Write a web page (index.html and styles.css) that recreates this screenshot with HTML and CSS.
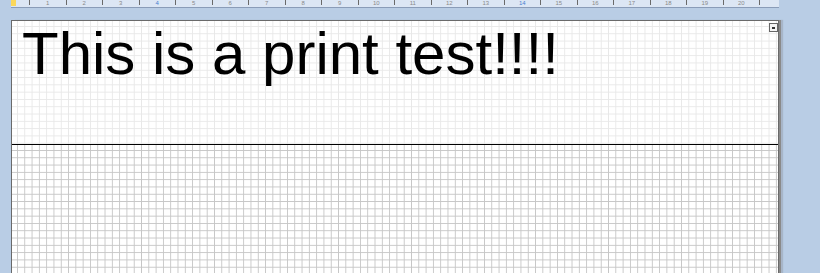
FILE: index.html
```html
<!doctype html>
<html lang="en">
 <head>
  <meta charset="UTF-8">
  <title>Print test</title>
  <link rel="stylesheet" href="styles.css">
 </head>
 <body>
  <div class="ruler">
   <span class="marker"></span>
   <div class="marks">
    <span class="tick"></span><span class="num">1</span>
    <span class="tick"></span><span class="num">2</span>
    <span class="tick"></span><span class="num">3</span>
    <span class="tick"></span><span class="num cur">4</span>
    <span class="tick"></span><span class="num">5</span>
    <span class="tick"></span><span class="num">6</span>
    <span class="tick"></span><span class="num">7</span>
    <span class="tick"></span><span class="num">8</span>
    <span class="tick"></span><span class="num">9</span>
    <span class="tick"></span><span class="num">10</span>
    <span class="tick"></span><span class="num">11</span>
    <span class="tick"></span><span class="num">12</span>
    <span class="tick"></span><span class="num">13</span>
    <span class="tick"></span><span class="num cur">14</span>
    <span class="tick"></span><span class="num">15</span>
    <span class="tick"></span><span class="num">16</span>
    <span class="tick"></span><span class="num">17</span>
    <span class="tick"></span><span class="num">18</span>
    <span class="tick"></span><span class="num">19</span>
    <span class="tick"></span><span class="num">20</span>
    <span class="tick"></span>
   </div>
  </div>

  <div class="page">
   <!-- 머리글 부분 -->
   <div class="head">
    <div class="title">This is a print test!!!!</div>
    <span class="btn"><span></span></span>
   </div>
   <!-- 본문 부분 -->
   <div class="body"></div>
  </div>
 </body>
</html>
```

FILE: styles.css
```css
body {
margin: 0;
height: 273px;
overflow: hidden;
background: #b9cde5;
font-family: "Liberation Sans", Arial, sans-serif;
}

/* 눈금자 */
.ruler {
position: relative;
height: 7px;
width: 768px;
margin-left: 11px;
background: #dce6f4;
border-bottom: solid 1px #8a9cb8;
overflow: hidden;
}

.marker {
position: absolute;
left: 0;
top: 0;
width: 5px;
height: 6px;
background: #fbd75b;
}

.marks {
display: flex;
padding-left: 18px;
}

.tick {
flex: 0 0 1px;
height: 5px;
background: #6a6a6a;
}

.num {
flex: 0 0 35.5px;
text-align: center;
font-size: 6px;
line-height: 6px;
color: #8a8a8a;
}

.cur {
color: #4a7fd0;
}

/* 페이지 */
.page {
width: 766px;
margin-left: 11px;
margin-top: 12px;
border: solid 1px #6a6a6a;
border-bottom: 0;
box-shadow: 2px 0 0 #8a8a8a, 4px 0 1px #a7b5c8;
background: #fff;
}

.head {
position: relative;
height: 123px;
border-bottom: solid 1px #000;
background-color: #fff;
background-image:
 linear-gradient(to right, #e8e8e8 1px, transparent 1px),
 linear-gradient(to bottom, #e8e8e8 1px, transparent 1px);
background-size: 7.3px 7.3px;
background-position: 5px 5px;
}

.title {
padding: 3px 0 0 10px;
font-size: 60px;
line-height: 60px;
color: #000;
white-space: nowrap;
}

.btn {
position: absolute;
right: 0;
top: 2px;
width: 7px;
height: 7px;
border: solid 1px #666;
background: #f4f4f4;
display: flex;
align-items: center;
justify-content: center;
}

.btn span {
width: 3px;
height: 2px;
background: #333;
}

.body {
height: 130px;
background-color: #fff;
background-image:
 linear-gradient(to right, #c6c6c6 1px, transparent 1px),
 linear-gradient(to bottom, #c6c6c6 1px, transparent 1px);
background-size: 7.3px 7.3px;
background-position: 5px 5px;
}
```
